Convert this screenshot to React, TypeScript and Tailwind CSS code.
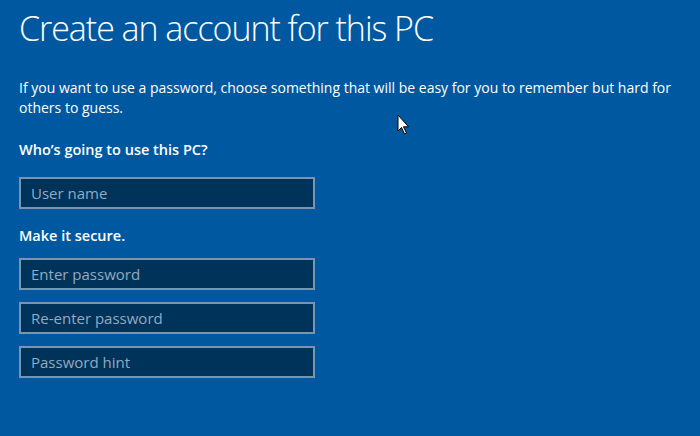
import React from "react";

const fieldCls =
  "h-[32px] w-[296px] border-2 border-[#7896b2] bg-[#00335a] px-[10px] text-[15px] text-white placeholder:text-[#93aac0] outline-none";

export default function App() {
  return (
    <div
      className="relative h-[436px] w-[700px] overflow-hidden bg-[#0059a0] text-white"
      style={{ fontFamily: '"Open Sans", "Noto Sans", sans-serif' }}
    >
      <div className="flex flex-col px-[19px] pt-[4px]">
        <h1 className="text-[34px] font-light leading-[48px] tracking-[-1.05px]">
          Create an account for this PC
        </h1>
        <p className="mt-[26px] w-[670px] text-[14px] leading-[20px]">
          If you want to use a password, choose something that will be easy for you to remember but hard for others to guess.
        </p>
        <div className="mt-[22px] text-[14.5px] font-semibold leading-[20px]">Who’s going to use this PC?</div>
        <input className={`mt-[17px] ${fieldCls}`} placeholder="User name" />
        <div className="mt-[17px] text-[14.5px] font-semibold leading-[20px]">Make it secure.</div>
        <div className="mt-[12px] flex flex-col gap-[12px]">
          <input className={fieldCls} placeholder="Enter password" type="password" />
          <input className={fieldCls} placeholder="Re-enter password" type="password" />
          <input className={fieldCls} placeholder="Password hint" />
        </div>
      </div>
      <svg className="absolute left-[397px] top-[114px]" width="14" height="22" viewBox="0 0 14 22">
        <path d="M1 1 L1 17 L4.5 13.5 L7.5 20 L9.5 19 L6.5 12.8 L11.5 12.8 Z" fill="#fff" stroke="#000" strokeWidth="1" />
      </svg>
    </div>
  );
}
